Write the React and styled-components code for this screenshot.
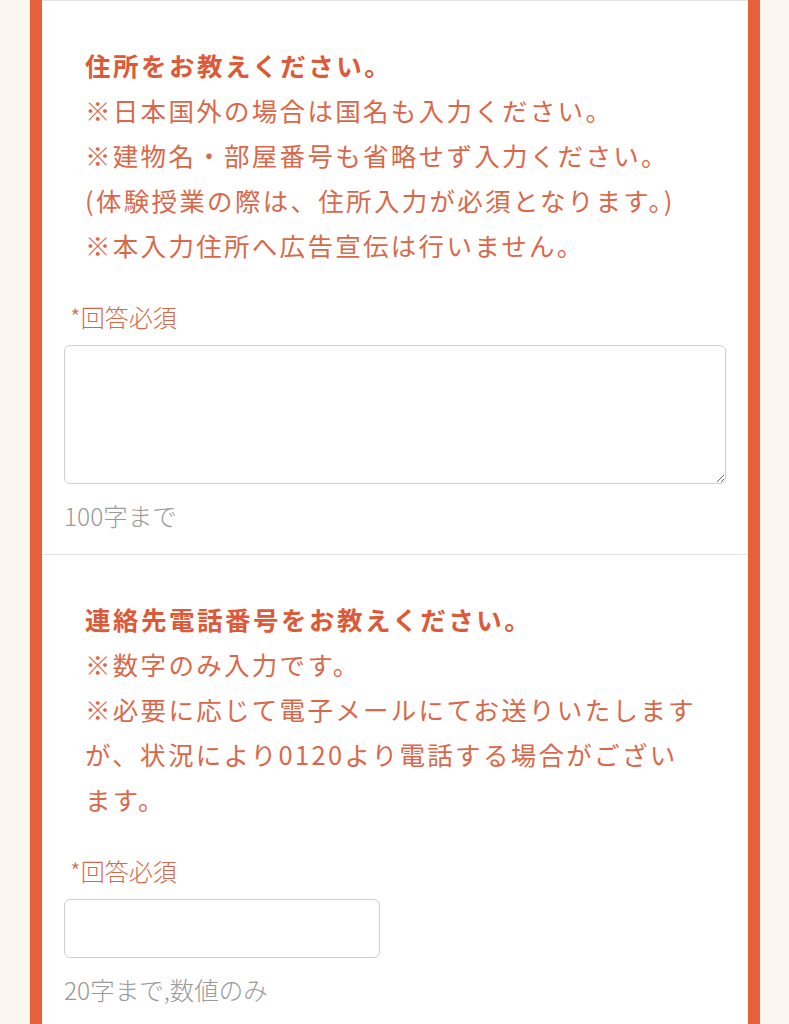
import React from "react";
import styled, { createGlobalStyle } from "styled-components";

const GlobalStyle = createGlobalStyle`
  html, body {
    margin: 0;
    padding: 0;
    background: #fbf7f0;
  }
  body {
    font-family: "Noto Sans CJK JP", "Noto Sans", sans-serif;
  }
`;

const questions = [
  {
    id: "address",
    title: "住所をお教えください。",
    lines: [
      "※日本国外の場合は国名も入力ください。",
      "※建物名・部屋番号も省略せず入力ください。",
      "(体験授業の際は、住所入力が必須となります。)",
      "※本入力住所へ広告宣伝は行いません。",
    ],
    multiline: true,
    hint: "100字まで",
  },
  {
    id: "tel",
    title: "連絡先電話番号をお教えください。",
    lines: [
      "※数字のみ入力です。",
      "※必要に応じて電子メールにてお送りいたしますが、状況により0120より電話する場合がございます。",
    ],
    multiline: false,
    hint: "20字まで,数値のみ",
  },
];

export default function App() {
  return (
    <>
      <GlobalStyle />
      <Page>
        <Card>
          {questions.map((q) => (
            <Section key={q.id}>
              <Question>
                <Title>{q.title}</Title>
                {q.lines.map((line, i) => (
                  <Line key={i}>{line}</Line>
                ))}
              </Question>
              <Required>*回答必須</Required>
              {q.multiline ? <TextArea /> : <TextInput type="text" />}
              <Hint>{q.hint}</Hint>
            </Section>
          ))}
        </Card>
      </Page>
    </>
  );
}

const Page = styled.div`
  min-height: 1024px;
  padding: 0 29px 0 30px;
`;

const Card = styled.div`
  background: #fff;
  border-left: 12px solid #e6603b;
  border-right: 12px solid #e6603b;
  min-height: 1024px;
`;

const Section = styled.section`
  border-top: 1px solid #e2e2e2;
  padding: 41px 22px 22px;
`;

const Question = styled.div`
  padding: 0 30px 0 21px;
  color: #d9684a;
  font-size: 25.5px;
  line-height: 45px;
  letter-spacing: 2.3px;
`;

const Title = styled.div`
  font-weight: 700;
  color: #dc5a38;
  letter-spacing: 2.5px;
`;

const Line = styled.div``;

const Required = styled.div`
  margin: 34px 0 12px 6px;
  font-size: 24px;
  line-height: 32px;
  font-weight: 300;
  color: #d2694c;
`;

const fieldBase = `
  display: block;
  box-sizing: border-box;
  border: 1px solid #cfcfcf;
  border-radius: 6px;
  background: #fff;
  font-family: inherit;
  font-size: 20px;
  outline: none;
  margin: 0;
`;

const TextArea = styled.textarea`
  ${fieldBase}
  width: 100%;
  height: 139px;
`;

const TextInput = styled.input`
  ${fieldBase}
  width: 316px;
  height: 59px;
`;

const Hint = styled.div`
  margin-top: 16px;
  font-size: 24.5px;
  line-height: 32px;
  font-weight: 300;
  color: #9a9a9a;
`;
